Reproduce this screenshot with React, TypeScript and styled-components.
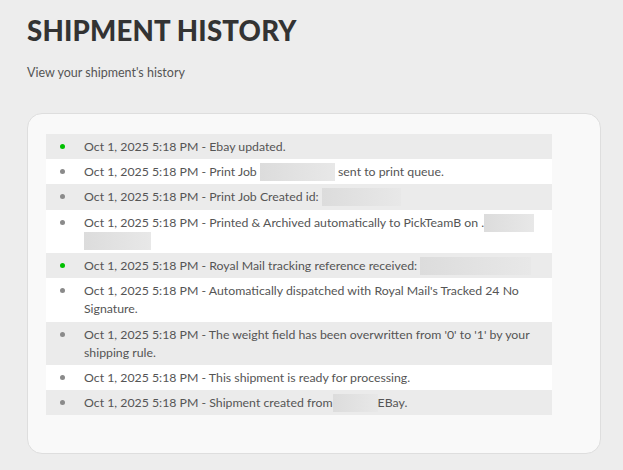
import React from "react";
import styled, { createGlobalStyle } from "styled-components";

const Global = createGlobalStyle`
  html, body { margin: 0; padding: 0; background: #ededed; }
  body { font-family: "Lato", "Open Sans", sans-serif; }
`;

const Page = styled.div`
  padding: 13px 22px 16px 27px;
  background: #ededed;
  min-height: 470px;
  box-sizing: border-box;
`;

const Title = styled.h1`
  margin: 0;
  font-family: "Lato", sans-serif;
  font-weight: 900;
  font-size: 27.6px;
  line-height: 36px;
  color: #333;
  letter-spacing: 0.2px;
`;

const Subtitle = styled.p`
  margin: 16px 0 0;
  font-size: 12.5px;
  line-height: 16px;
  color: #555;
`;

const Card = styled.div`
  margin-top: 32px;
  background: #f9f9f9;
  border: 1px solid #dedede;
  border-radius: 15px;
  padding: 20px 48px 38px 18px;
`;

const List = styled.ul`
  list-style: none;
  margin: 0;
  padding: 0;
  width: 506px;
`;

const Row = styled.li<{ $alt: boolean }>`
  display: flex;
  align-items: flex-start;
  background: ${(p) => (p.$alt ? "#ebebeb" : "#ffffff")};
  padding: 4px 0 3px;
`;

const Dot = styled.span<{ $green: boolean }>`
  flex: none;
  width: 5px;
  height: 5px;
  border-radius: 50%;
  margin: 6px 19px 0 14px;
  background: ${(p) => (p.$green ? "#00c000" : "#8a8a8a")};
`;

const Text = styled.span`
  font-size: 12.3px;
  line-height: 18.2px;
  color: #555;
  padding-right: 2px;
`;

const Redacted = styled.span<{ $w: number }>`
  display: inline-block;
  vertical-align: middle;
  width: ${(p) => p.$w}px;
  height: 18px;
  background: linear-gradient(90deg, #dcdcdc, #e8e8e8);
  margin-top: -2px;
`;

type Item = { green?: boolean; body: React.ReactNode };

const ts = "Oct 1, 2025 5:18 PM - ";

const items: Item[] = [
  { green: true, body: <>Ebay updated.</> },
  { body: <>Print Job <Redacted $w={75} /> sent to print queue.</> },
  { body: <>Print Job Created id: <Redacted $w={79} /></> },
  {
    body: (
      <>
        Printed &amp; Archived automatically to PickTeamB on .<Redacted $w={50} />{" "}
        <Redacted $w={67} />
      </>
    ),
  },
  { green: true, body: <>Royal Mail tracking reference received: <Redacted $w={111} /></> },
  { body: <>Automatically dispatched with Royal Mail's Tracked 24 No Signature.</> },
  { body: <>The weight field has been overwritten from '0' to '1' by your shipping rule.</> },
  { body: <>This shipment is ready for processing.</> },
  { body: <>Shipment created from<Redacted $w={45} />EBay.</> },
];

export default function App() {
  return (
    <>
      <Global />
      <Page>
        <Title>SHIPMENT HISTORY</Title>
        <Subtitle>View your shipment's history</Subtitle>
        <Card>
          <List>
            {items.map((it, i) => (
              <Row key={i} $alt={i % 2 === 0}>
                <Dot $green={!!it.green} />
                <Text>
                  {ts}
                  {it.body}
                </Text>
              </Row>
            ))}
          </List>
        </Card>
      </Page>
    </>
  );
}
